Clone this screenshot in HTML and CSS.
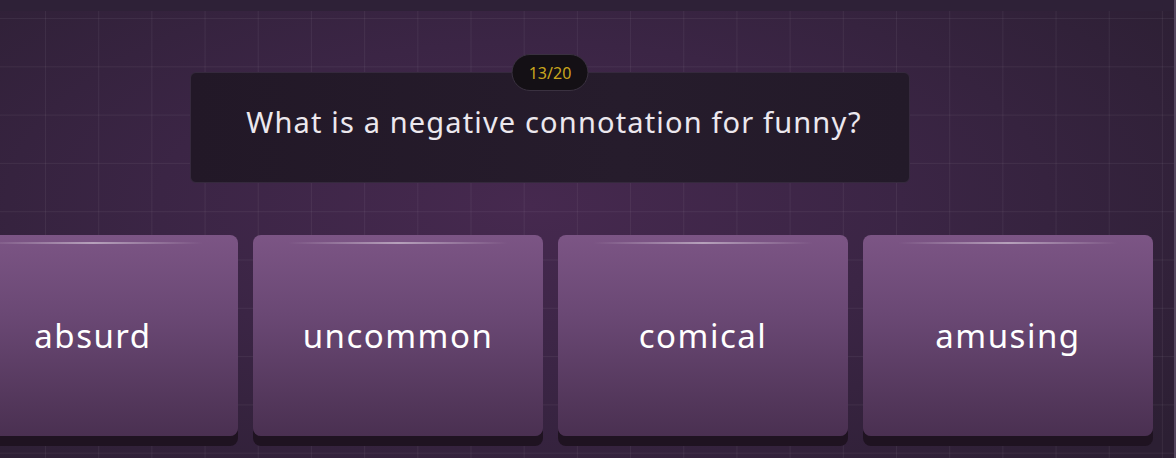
FILE: index.html
```html
<!DOCTYPE html>
<html lang="en">
<head>
<meta charset="utf-8">
<title>Quiz</title>
<link rel="stylesheet" href="styles.css">
</head>
<body>
<div class="app">
  <div class="topbar"></div>
  <main class="stage">
    <section class="question-card">
      <span class="badge">13/20</span>
      <p class="question">What is a negative connotation for funny?</p>
    </section>
    <div class="answers">
      <button class="answer">absurd</button>
      <button class="answer">uncommon</button>
      <button class="answer">comical</button>
      <button class="answer">amusing</button>
    </div>
  </main>
</div>
</body>
</html>
```

FILE: styles.css
```css
* { box-sizing: border-box; }

html, body {
  margin: 0;
  height: 458px;
  overflow: hidden;
}

body {
  font-family: "Noto Sans", "Lato", sans-serif;
  background-color: #33223c;
}

.app {
  height: 458px;
  border-right: 2px solid #54465e;
  background-image:
    linear-gradient(90deg, rgba(255,255,255,0.055) 1px, transparent 1px),
    linear-gradient(0deg, rgba(255,255,255,0.055) 1px, transparent 1px),
    radial-gradient(ellipse 70% 80% at 45% 45%, #46294f 0%, #3b2545 45%, #2c1f33 100%);
  background-size: 53.2px 48.3px, 53.2px 48.3px, 100% 100%;
  background-position: 45px 0, 0 19px, 0 0;
  overflow: hidden;
}

.topbar {
  height: 11px;
  background: #2e2137;
}

.stage {
  width: 1100px;
  padding-top: 61px;
}

.question-card {
  position: relative;
  width: 720px;
  height: 111px;
  margin: 0 auto;
  background: linear-gradient(90deg, #221827 0%, #261c2c 60%, #231a29 100%);
  border: 1px solid #35293d;
  border-radius: 6px;
  display: flex;
  align-items: center;
  justify-content: center;
  padding: 0 0 12px 8px;
}

.badge {
  position: absolute;
  top: -19px;
  left: 50%;
  transform: translateX(-50%);
  width: 77px;
  height: 37px;
  border-radius: 19px;
  background: #141015;
  border: 1px solid #3a3140;
  color: #c9a51d;
  font-size: 16px;
  display: flex;
  align-items: center;
  justify-content: center;
}

.question {
  margin: 0;
  color: #ece8ee;
  font-size: 29px;
  font-weight: 400;
  letter-spacing: 1.15px;
}

.answers {
  display: flex;
  gap: 15px;
  width: 1205px;
  margin: 52px 0 0 -52px;
}

.answer {
  position: relative;
  flex: 0 0 290px;
  height: 201px;
  border: none;
  border-radius: 8px;
  background: linear-gradient(180deg, #7c5585 0%, #6a4874 40%, #4a3051 100%);
  box-shadow: 0 10px 0 #1f1321;
  color: #ffffff;
  font-family: inherit;
  font-size: 33px;
  font-weight: 400;
  letter-spacing: 1.5px;
  padding: 0;
}

.answer::before {
  content: "";
  position: absolute;
  top: 7px;
  left: 12%;
  right: 12%;
  height: 2px;
  background: linear-gradient(90deg, rgba(255,255,255,0) 0%, rgba(255,255,255,0.45) 50%, rgba(255,255,255,0) 100%);
}
```
